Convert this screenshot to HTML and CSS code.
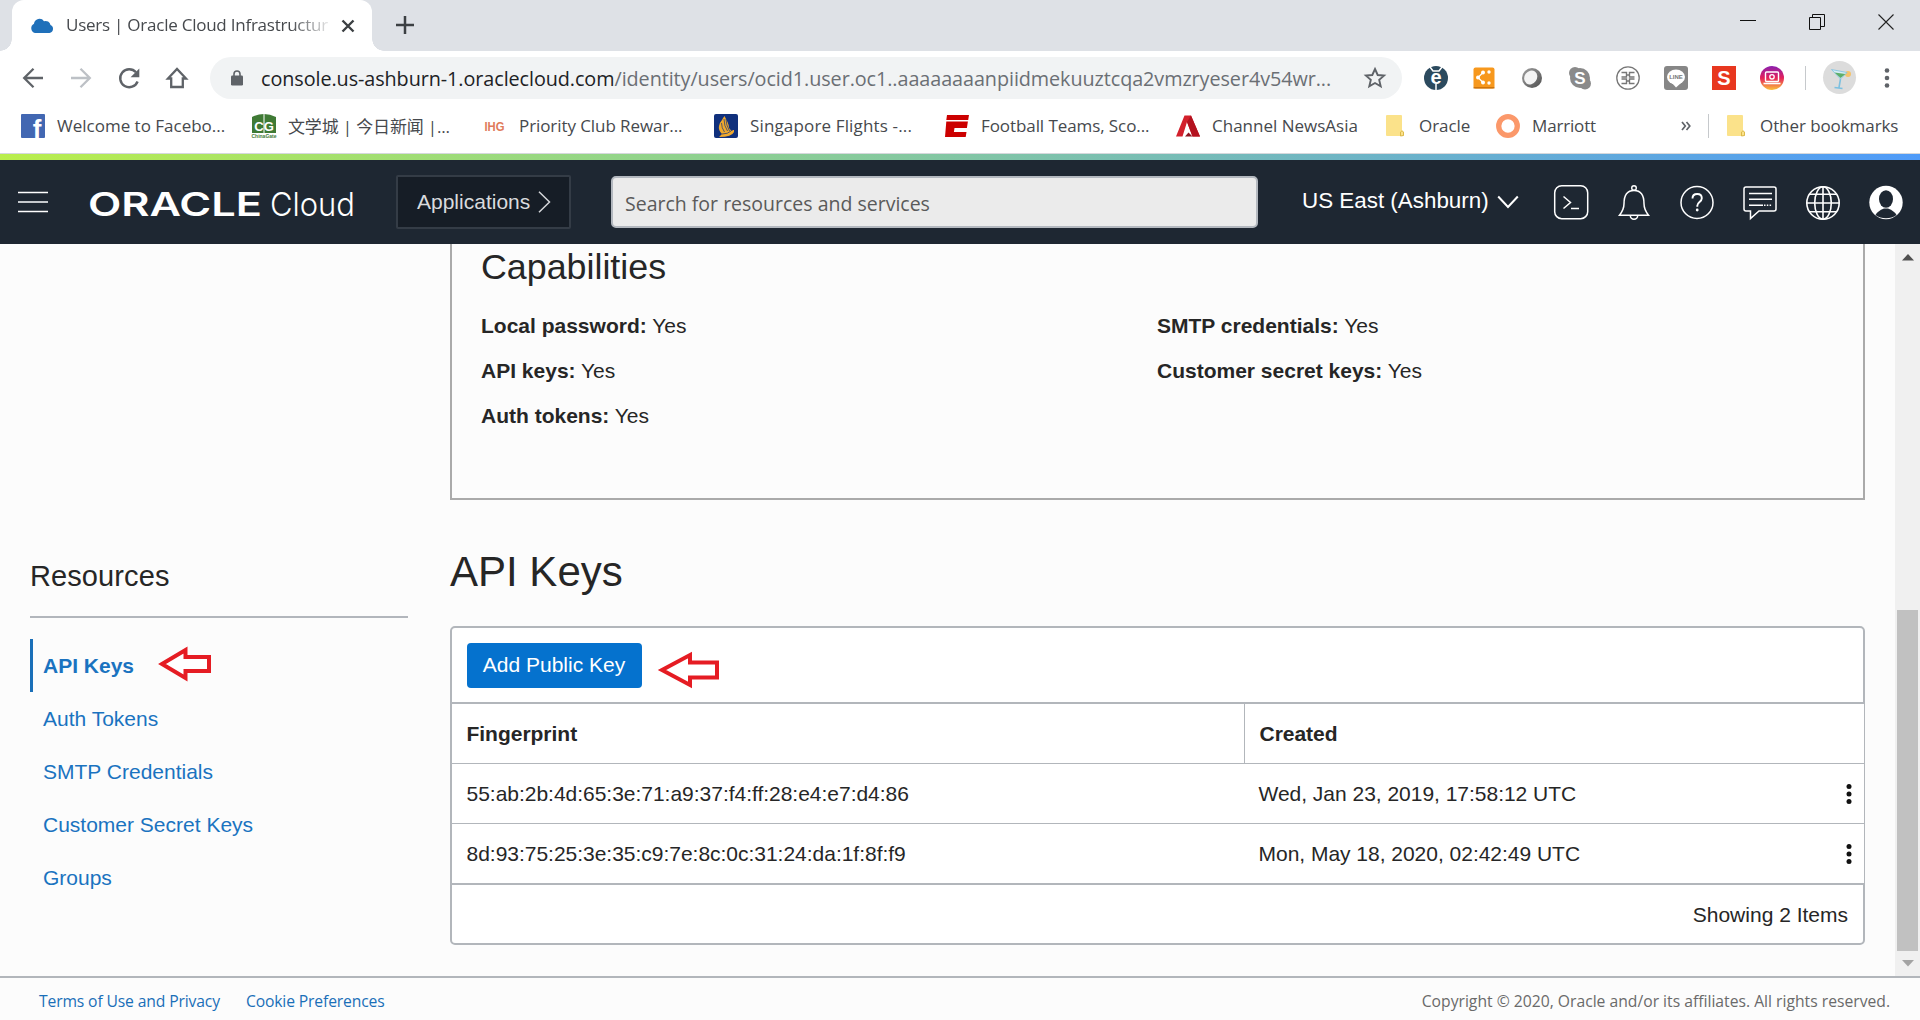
FILE: index.html
```html
<!DOCTYPE html>
<html lang="en">
<head>
<meta charset="utf-8">
<title>Users | Oracle Cloud Infrastructure</title>
<link rel="stylesheet" href="styles.css">
</head>
<body>
<header class="browser">
  <div class="tabstrip">
    <div class="tab">
      <svg class="tab-icon" width="24" height="16" viewBox="0 0 24 16"><path d="M5 15a5 5 0 0 1-1-9.3A5.500 5.500 0 0 1 14 3.200 5 5 0 0 1 20.500 7 4.200 4.200 0 0 1 19.500 15z" fill="#1f70ba"/></svg>
      <span class="tab-title">Users | Oracle Cloud Infrastructur</span>
      <svg class="tab-close" width="14" height="14" viewBox="0 0 14 14"><path d="M1.500 1.500l11 11M12.500 1.500l-11 11" stroke="#3c4043" stroke-width="2.400"/></svg>
    </div>
    <svg class="new-tab" width="18" height="18" viewBox="0 0 18 18"><path d="M9 0v18M0 9h18" stroke="#3c4043" stroke-width="2.500"/></svg>
    <div class="window-controls">
      <svg width="16" height="16" viewBox="0 0 16 16"><path d="M0 6.500h16" stroke="#111"/></svg>
      <svg width="16" height="16" viewBox="0 0 16 16"><path d="M.5 3.500h11v12h-11zM3.500 3.500v-3h12v12h-4" fill="none" stroke="#111"/></svg>
      <svg width="16" height="16" viewBox="0 0 16 16"><path d="M.5.5l15 15M15.500.5l-15 15" stroke="#222" stroke-width="1.100"/></svg>
    </div>
  </div>
  <div class="toolbar">
    <div class="nav-buttons">
      <svg width="24" height="24" viewBox="0 0 24 24"><path d="M22 12H4M12.500 2.700L3.200 12l9.300 9.300" fill="none" stroke="#5f6368" stroke-width="2.300"/></svg>
      <svg width="24" height="24" viewBox="0 0 24 24"><path d="M2 12h18M11.500 2.700l9.300 9.300-9.300 9.300" fill="none" stroke="#bdc1c6" stroke-width="2.300"/></svg>
      <svg width="24" height="24" viewBox="0 0 24 24"><path d="M20.600 15.500A9 9 0 1 1 19 6.300" fill="none" stroke="#5f6368" stroke-width="2.400"/><path d="M22.300 2.500v8.700h-8.700z" fill="#5f6368"/></svg>
      <svg width="24" height="24" viewBox="0 0 24 24"><path d="M3 12.500L12 3l9 9.500h-3.200V21H6.200v-8.500z" fill="none" stroke="#5f6368" stroke-width="2.300"/></svg>
    </div>
    <div class="omnibox">
      <svg width="12" height="16" viewBox="0 0 12 16"><rect y="5.500" width="12" height="10" rx="1.300" fill="#5f6368"/><path d="M3 6V4a3 3 0 0 1 6 0v2" fill="none" stroke="#5f6368" stroke-width="1.600"/></svg>
      <span class="url"><span class="url-host">console.us-ashburn-1.oraclecloud.com</span>/identity/users/ocid1.user.oc1..aaaaaaaanpiidmekuuztcqa2vmzryeser4v54wr...</span>
      <svg width="22" height="22" viewBox="0 0 22 22"><path d="M11 2l2.700 6 6.400.6-4.900 4.300 1.500 6.400L11 16l-5.700 3.300 1.500-6.400L1.900 8.600 8.300 8z" fill="none" stroke="#5f6368" stroke-width="1.900"/></svg>
    </div>
    <div class="extensions">
      <svg width="24" height="24" viewBox="0 0 24 24"><circle cx="12" cy="12" r="12" fill="#2c4a5e"/><path d="M6 1l3 4h6l3-4" fill="none" stroke="#fff" stroke-width="1.500"/><text x="12" y="18" class="g-e">e</text><path d="M12 18v6" stroke="#fff" stroke-width="1.500"/></svg>
      <svg width="24" height="24" viewBox="0 0 24 24"><rect x="1.500" y="1.500" width="21" height="21" rx="2" fill="#f7981d"/><path d="M1.500 21.800h21" stroke="#c8700c" stroke-width="1.400"/><g fill="#fff"><circle cx="6" cy="11.500" r="2"/><circle cx="11" cy="6.500" r="2"/><circle cx="11" cy="16.500" r="2"/><circle cx="17" cy="6" r="1.700"/><circle cx="17" cy="17" r="1.700"/></g><path d="M11 6.500l-5 5 5 5" fill="none" stroke="#fff" stroke-width="1.200"/></svg>
      <svg width="24" height="24" viewBox="0 0 24 24"><defs><linearGradient id="orb" x1="0" y1="0" x2="1" y2="1"><stop offset="0" stop-color="#a0a0a0"/><stop offset="1" stop-color="#505050"/></linearGradient></defs><circle cx="12" cy="12" r="10" fill="url(#orb)"/><ellipse cx="11" cy="11.500" rx="6.200" ry="7.300" transform="rotate(35 11 11)" fill="#f4f4f4"/></svg>
      <svg width="24" height="24" viewBox="0 0 24 24"><circle cx="12" cy="12" r="10" fill="#8a8a8a"/><circle cx="7" cy="7" r="6" fill="#8a8a8a"/><circle cx="17" cy="17.500" r="6" fill="#8a8a8a"/><text x="12" y="18" class="g-skype">S</text></svg>
      <svg width="24" height="24" viewBox="0 0 24 24"><circle cx="12" cy="12" r="11.200" fill="none" stroke="#777" stroke-width="1.300"/><path d="M5.500 6.500h5V11h-5M18.500 6.500h-5V11h5M5.500 17.500h5V13h-5M18.500 17.500h-5V13h5M10.500 9h3M10.500 15h3" fill="none" stroke="#777" stroke-width="1.400"/></svg>
      <svg width="24" height="24" viewBox="0 0 24 24"><rect width="24" height="24" rx="3" fill="#868686"/><ellipse cx="12" cy="11" rx="9" ry="7.500" fill="#fff"/><path d="M8 17h9l-5 4.500z" fill="#fff"/><text x="12" y="13.300" class="g-line">LINE</text></svg>
      <svg width="24" height="24" viewBox="0 0 24 24"><rect width="24" height="24" fill="#e8371f"/><text x="12" y="19" class="g-s">S</text></svg>
      <svg width="24" height="24" viewBox="0 0 24 24"><defs><linearGradient id="ig" x1="0" y1="0" x2="0" y2="1"><stop offset="0" stop-color="#8a1fb0"/><stop offset=".5" stop-color="#e4215a"/><stop offset="1" stop-color="#fcc13a"/></linearGradient></defs><circle cx="12" cy="12" r="12" fill="url(#ig)"/><rect x="5.500" y="6" width="13" height="9.500" rx="1" fill="none" stroke="#fff" stroke-width="1.400"/><circle cx="12" cy="10.800" r="2.200" fill="none" stroke="#fff" stroke-width="1.300"/><path d="M3.500 17.500h17" stroke="#fff" stroke-width="1.600"/></svg>
    </div>
    <span class="divider"></span>
    <svg class="profile" width="33" height="33" viewBox="0 0 33 33"><circle cx="16.500" cy="16.500" r="16.500" fill="#dcdcdc"/><circle cx="25" cy="13" r="3" fill="#f5c36b"/><path d="M8.500 8.500L24 11.500l-6.500 6.500z" fill="#d5eef5" stroke="#7cc0e0" stroke-width=".8"/><path d="M11.500 11.500l11 1.500-5 4z" fill="#5fae6a"/><path d="M17.500 18l-1.500 8.500M11.500 26.500l8 1" stroke="#7cc0e0" stroke-width="1.600"/></svg>
    <svg class="menu-dots" width="6" height="20" viewBox="0 0 6 20"><g fill="#5f6368"><circle cx="3" cy="2.500" r="2.300"/><circle cx="3" cy="10" r="2.300"/><circle cx="3" cy="17.500" r="2.300"/></g></svg>
  </div>
  <div class="bookmarks">
    <div class="bookmark"><svg width="24" height="24" viewBox="0 0 24 24"><rect width="24" height="24" rx="1" fill="#4267b2"/><text x="16" y="24" class="g-fb">f</text></svg><span>Welcome to Facebo...</span></div>
    <div class="bookmark"><svg width="24" height="24" viewBox="0 0 24 24"><path d="M0 3q12-6 24 0v16H0z" fill="#3f7a35"/><path d="M12 0v19" stroke="#fff"/><text x="12" y="17" class="g-cg">CG</text><text x="12" y="23.500" class="g-gate">ChinaGate</text></svg><span class="tight">文学城 | 今日新闻 |...</span></div>
    <div class="bookmark"><svg width="24" height="24" viewBox="0 0 24 24"><text x="11.500" y="16.500" class="g-ihg" textLength="20" lengthAdjust="spacingAndGlyphs">IHG</text></svg><span class="snug">Priority Club Rewar...</span></div>
    <div class="bookmark"><svg width="24" height="24" viewBox="0 0 24 24"><rect width="24" height="24" rx="2" fill="#10307c"/><path d="M10.500 2q1.500 3 3 6t1.500 6l3 3.500q-1 2.500-4 2.500l5-4h1v2q-2 5-15 5l3-3q-4-4-3-8 1-4 3-6 1-2 2.500-4z" fill="#f0a92c"/><path d="M10 5q0 7 3.500 12M7.500 9q0 5 3 9M12 5q0 6 3.500 12M8 20q6 0 9-3" fill="none" stroke="#10307c" stroke-width=".7"/></svg><span class="loose">Singapore Flights -...</span></div>
    <div class="bookmark"><svg width="24" height="24" viewBox="0 0 24 24"><path d="M2 1h22l-.8 5H1.300zM1.300 7.500h21.600l-1 6.500H9.500l-.6 4h12.600l-.8 5H0z" fill="#cc0000"/></svg><span class="snug">Football Teams, Sco...</span></div>
    <div class="bookmark cna"><svg width="24" height="24" viewBox="0 0 24 24"><path d="M8.500 1.500h6.500L24 22.500h-7.500L11 8 6.500 22.500H0z" fill="#d3202c"/><path d="M15 1.500l9 21h-7.500L11 8z" fill="#b3121f"/><path d="M9 22.500l7.500 0-4-4z" fill="#8e1520"/></svg><span>Channel NewsAsia</span></div>
    <div class="bookmark folder"><svg width="24" height="24" viewBox="0 0 24 24"><path d="M3 2q0-1 1-1h14q1 0 1 1v15l2 1v3q0 1-1 1H4q-1 0-1-1z" fill="#fbe28a"/><path d="M17.500 22v-4q1.500-2.500 3 0v3.500z" fill="#fbe28a" stroke="#dcb94a"/></svg><span class="snug">Oracle</span></div>
    <div class="bookmark"><svg width="24" height="24" viewBox="0 0 24 24"><circle cx="12" cy="12" r="9.300" fill="none" stroke="#fb986a" stroke-width="5.300"/></svg><span class="tight">Marriott</span></div>
    <svg class="more" width="10" height="10" viewBox="0 0 10 10"><path d="M1 1l3.300 4L1 9M5.500 1l3.300 4-3.300 4" fill="none" stroke="#5f6368" stroke-width="1.700"/></svg>
    <span class="divider"></span>
    <div class="bookmark other"><svg width="24" height="24" viewBox="0 0 24 24"><path d="M3 2q0-1 1-1h14q1 0 1 1v15l2 1v3q0 1-1 1H4q-1 0-1-1z" fill="#fbe28a"/><path d="M17.500 22v-4q1.500-2.500 3 0v3.500z" fill="#fbe28a" stroke="#dcb94a"/></svg><span class="snug">Other bookmarks</span></div>
  </div>
</header>

<div class="accent"></div>
<header class="console-bar">
  <svg class="burger" width="30" height="22" viewBox="0 0 30 22"><path d="M0 1.500h30M0 20.500h30" stroke="#fff" stroke-width="1.400"/><path d="M0 11h30" stroke="#c4c8cc" stroke-width="2"/></svg>
  <svg class="brand" width="266" height="32" viewBox="0 0 266 32"><text x="-1" y="27.500" class="brand-oracle" textLength="174" lengthAdjust="spacingAndGlyphs">ORACLE</text><text x="181" y="27.500" class="brand-cloud" textLength="85" lengthAdjust="spacingAndGlyphs">Cloud</text></svg>
  <div class="apps"><span>Applications</span><svg width="13" height="22" viewBox="0 0 13 22"><path d="M1 .8L11.500 11 1 21.200" fill="none" stroke="#d5d7da" stroke-width="1.500"/></svg></div>
  <div class="search"><span>Search for resources and services</span></div>
  <div class="region"><span>US East (Ashburn)</span><svg width="22" height="14" viewBox="0 0 22 14"><path d="M1.200 1.500L11 12l9.800-10.500" fill="none" stroke="#fff" stroke-width="2"/></svg></div>
  <div class="actions">
    <svg width="36" height="36" viewBox="0 0 36 36"><rect x="1.700" y="1.700" width="33" height="33" rx="7" fill="none" stroke="#fff" stroke-width="1.500"/><path d="M10.500 12.500l7 6-7 6M18 24.500h8" fill="none" stroke="#fff" stroke-width="1.500"/></svg>
    <svg width="36" height="36" viewBox="0 0 36 36"><path d="M3.500 31.200c2.800-3.600 4.500-7 4.500-11.500 0-8 3-13.200 10-13.200s10 5.200 10 13.200c0 4.500 1.700 7.900 4.500 11.500z" fill="none" stroke="#fff" stroke-width="1.500"/><circle cx="18" cy="4" r="2.300" fill="none" stroke="#fff" stroke-width="1.400"/><path d="M14.300 31.500a3.700 3.700 0 0 0 7.400 0" fill="none" stroke="#fff" stroke-width="1.500"/></svg>
    <svg width="36" height="36" viewBox="0 0 36 36"><circle cx="18" cy="18.500" r="16" fill="none" stroke="#fff" stroke-width="1.500"/><path d="M13.500 14.500c0-3 2-4.500 4.700-4.500s4.600 1.500 4.600 4.200c0 3.600-4.500 4-4.500 7.500v1" fill="none" stroke="#fff" stroke-width="1.900"/><circle cx="18.200" cy="26" r="1.400" fill="#fff"/></svg>
    <svg width="36" height="36" viewBox="0 0 36 36"><path d="M4 3h28q2 0 2 2v20q0 2-2 2H17l-8.500 7.500V27H4q-2 0-2-2V5q0-2 2-2z" fill="none" stroke="#fff" stroke-width="1.500"/><path d="M7 9.500h23M7 15.300h23M7 21.300h14" stroke="#fff" stroke-width="1.500"/><path d="M22 21.300h8" stroke="#fff" stroke-width="1.500" stroke-dasharray="1.500 1.300"/></svg>
    <svg width="36" height="36" viewBox="0 0 36 36"><g fill="none" stroke="#fff" stroke-width="1.600"><circle cx="18" cy="19" r="16.200"/><ellipse cx="18" cy="19" rx="8.300" ry="16.200"/><path d="M18 2.800v32.400M1.800 19h32.400M4.500 10.300h27M4.500 27.700h27"/></g></svg>
    <svg width="36" height="36" viewBox="0 0 36 36"><circle cx="18" cy="18.500" r="16.700" fill="#fff"/><ellipse cx="18" cy="15" rx="7" ry="8.800" fill="#1e2732"/><path d="M7.500 31q2-4 8.500-6.500h4q6.500 2.500 8.500 6.500-4.500 3.300-10.500 3.300T7.500 31z" fill="#1e2732"/></svg>
  </div>
</header>

<div class="viewport">
  <aside class="sidebar">
    <h2>Resources</h2>
    <nav>
      <a class="active">API Keys<svg class="callout-side" width="53" height="34" viewBox="0 0 53 34"><path d="M3 17L26.500 3v7H50v14H26.500v7z" fill="#fff" stroke="#e51c23" stroke-width="4"/></svg></a>
      <a>Auth Tokens</a>
      <a>SMTP Credentials</a>
      <a>Customer Secret Keys</a>
      <a>Groups</a>
    </nav>
  </aside>
  <main>
    <section class="capabilities">
      <h3>Capabilities</h3>
      <div class="facts">
        <p><b>Local password:</b> Yes</p><p><b>SMTP credentials:</b> Yes</p>
        <p><b>API keys:</b> Yes</p><p><b>Customer secret keys:</b> Yes</p>
        <p><b>Auth tokens:</b> Yes</p>
      </div>
    </section>
    <h1>API Keys</h1>
    <section class="panel">
      <div class="panel-top">
        <button type="button">Add Public Key</button>
        <svg class="callout" width="61" height="36" viewBox="0 0 61 36"><path d="M3 18L31 3v7.500h27v15H31V33z" fill="#fff" stroke="#e51c23" stroke-width="4"/></svg>
      </div>
      <div class="table">
        <div class="row head"><span>Fingerprint</span><span>Created</span></div>
        <div class="row"><span>55:ab:2b:4d:65:3e:71:a9:37:f4:ff:28:e4:e7:d4:86</span><span>Wed, Jan 23, 2019, 17:58:12 UTC</span><svg width="6" height="20" viewBox="0 0 6 20"><g fill="#111"><circle cx="3" cy="2.500" r="2.500"/><circle cx="3" cy="10" r="2.500"/><circle cx="3" cy="17.500" r="2.500"/></g></svg></div>
        <div class="row"><span>8d:93:75:25:3e:35:c9:7e:8c:0c:31:24:da:1f:8f:f9</span><span>Mon, May 18, 2020, 02:42:49 UTC</span><svg width="6" height="20" viewBox="0 0 6 20"><g fill="#111"><circle cx="3" cy="2.500" r="2.500"/><circle cx="3" cy="10" r="2.500"/><circle cx="3" cy="17.500" r="2.500"/></g></svg></div>
      </div>
      <div class="panel-bottom">Showing 2 Items</div>
    </section>
  </main>
  <div class="scrollbar">
    <svg width="12" height="7" viewBox="0 0 12 7"><path d="M0 6.500L6 0l6 6.500z" fill="#505050"/></svg>
    <div class="thumb"></div>
    <svg width="12" height="7" viewBox="0 0 12 7"><path d="M0 0l6 6.500L12 0z" fill="#a3a3a3"/></svg>
  </div>
</div>

<footer>
  <a>Terms of Use and Privacy</a>
  <a>Cookie Preferences</a>
  <span>Copyright © 2020, Oracle and/or its affiliates. All rights reserved.</span>
</footer>
</body>
</html>
```
FILE: styles.css
```css
* { box-sizing: border-box; }
body {
  margin: 0;
  width: 1920px;
  height: 1020px;
  display: flex;
  flex-direction: column;
  overflow: hidden;
  background: #fcfcfc;
  color: #262626;
  font: 21px "Liberation Sans", sans-serif;
}
h1, h2, h3, p { margin: 0; font-weight: 400; }
svg { display: block; flex: none; overflow: visible; }
span, a { white-space: nowrap; }

/* Browser chrome */
.browser {
  font: 17px "Open Sans", "Noto Sans CJK SC", sans-serif;
  color: #46494d;
  background: #fff;
}
.tabstrip {
  height: 51px;
  display: flex;
  align-items: center;
  padding-left: 12px;
  background: radial-gradient(circle at 0 0, #dee1e6 11.500px, #fff 12px) 0 39px / 12px 12px no-repeat, #dee1e6;
}
.tab {
  position: relative;
  width: 360px;
  height: 51px;
  display: flex;
  align-items: center;
  padding-left: 18px;
  background: #fff;
  border-radius: 12px 12px 0 0;
}
.tab::after {
  content: "";
  position: absolute;
  left: 360px;
  bottom: 0;
  width: 12px;
  height: 12px;
  background: radial-gradient(circle at 12px 0, #dee1e6 11.500px, #fff 12px);
}
.tab-title {
  width: 263px;
  margin: -2px 0 0 12px;
  letter-spacing: -0.24px;
  -webkit-mask-image: linear-gradient(90deg, #000 225px, transparent 268px);
  mask-image: linear-gradient(90deg, #000 225px, transparent 268px);
}
.tab-close { margin-left: 12px; }
.new-tab { margin: -1px 0 0 24px; }
.window-controls {
  display: flex;
  gap: 53px;
  margin: -8px 26px 0 auto;
}
.toolbar {
  height: 54px;
  display: flex;
  align-items: center;
  padding-left: 21px;
}
.nav-buttons { display: flex; gap: 24px; margin-top: -1px; }
.omnibox {
  width: 1192px;
  height: 42px;
  display: flex;
  align-items: center;
  margin-left: 21px;
  padding: 0 16px 0 21px;
  border-radius: 21px;
  background: #f1f3f4;
}
.url { margin-left: 18px; font-size: 19.800px; letter-spacing: -0.07px; color: #6b6f74; }
.url-host { color: #202124; }
.omnibox svg:last-child { margin-left: auto; }
.extensions { display: flex; gap: 24px; margin-left: 22px; }
.divider { width: 1px; height: 24px; background: #c6c9cc; }
.toolbar .divider { margin-left: 21px; }
.profile { margin: -1px 0 0 17px; }
.menu-dots { margin-left: 28px; }
.bookmarks {
  height: 48px;
  display: flex;
  align-items: center;
  padding-left: 21px;
  padding-bottom: 6px;
}
.bookmark {
  width: 231px;
  display: flex;
  align-items: center;
  gap: 12px;
}
.bookmark span { margin-top: -2px; }
.bookmark .snug { letter-spacing: -0.08px; }
.bookmark .tight { letter-spacing: -0.16px; }
.bookmark .loose { letter-spacing: 0.15px; }
.bookmark.cna { width: 207px; }
.bookmark.folder { width: 113px; }
.bookmark.folder + .bookmark { width: 185px; }
.bookmark.other { width: auto; margin-left: 15px; }
.bookmarks .divider { margin-left: 17px; }

text { font-family: "Liberation Sans", sans-serif; font-weight: 700; fill: #fff; text-anchor: middle; }
.g-e { font-size: 20px; }
.g-skype { font-size: 17px; }
.g-line { font-size: 6px; fill: #777; }
.g-s { font-size: 20px; }
.g-fb { font-size: 26px; }
.g-cg { font-size: 13px; }
.g-gate { font-size: 5px; fill: #3f7a35; }
.g-ihg { font-size: 12px; fill: #e07a5a; }

/* Console header */
.accent {
  height: 7px;
  border-top: 1px solid #d5d8dc;
  background: linear-gradient(90deg, #b9ee4c, #92d48a 33%, #72b8bd 66%, #4f9bf9);
}
.console-bar {
  height: 84px;
  display: flex;
  align-items: center;
  padding-left: 18px;
  background: #1e2732;
  color: #fff;
}
.brand { margin-left: 41px; margin-top: 3px; }
.brand text { text-anchor: start; }
.brand-oracle { font: 600 32px Inter, sans-serif; }
.brand-cloud { font: 300 33px Inter, sans-serif; }
.apps {
  width: 175px;
  height: 54px;
  display: flex;
  align-items: center;
  gap: 8px;
  margin-left: 41px;
  padding-left: 19px;
  border: 2px solid #343c46;
  border-radius: 2px;
  background: #161d26;
  color: #d9dbde;
}
.search {
  width: 647px;
  height: 52px;
  display: flex;
  align-items: center;
  margin-left: 40px;
  padding: 2px 0 0 12px;
  border: 2px solid #b3b8bf;
  border-radius: 5px;
  background: #ebebeb;
  color: #5a5a5a;
  font: 19.500px "Open Sans", sans-serif;
}
.region { display: flex; align-items: center; gap: 7px; margin-left: 44px; font-size: 22.400px; }
.region span { width: 188px; margin-top: -2px; }
.actions { display: flex; gap: 27px; margin-left: auto; margin-right: 16px; }

/* Page content */
.viewport {
  height: 732px;
  display: flex;
  overflow: hidden;
}
.sidebar { width: 378px; margin-left: 30px; padding-top: 312px; }
.sidebar h2 {
  height: 62px;
  border-bottom: 2px solid #b2b6bc;
  font-size: 29px;
  letter-spacing: 0.1px;
  line-height: 40px;
}
nav { margin-top: 21px; }
nav a {
  height: 53px;
  display: flex;
  align-items: center;
  padding-left: 10px;
  border-left: 3px solid transparent;
  color: #1a73c0;
}
nav .active { border-color: #1a6fb8; font-weight: 700; }
.callout-side { margin-left: 25px; margin-top: -3px; }
main { width: 1415px; margin-left: 42px; }
.capabilities {
  height: 256px;
  padding: 3px 0 0 29px;
  border: solid #aaa;
  border-width: 0 2px 2px;
}
.capabilities h3 { font-size: 35.800px; line-height: 40px; margin-bottom: 16px; }
.facts { display: grid; grid-template-columns: 676px 1fr; line-height: 45px; }
h1 { margin: 47px 0 29px; font-size: 42px; line-height: 50px; }
.panel { background: #fff; border-radius: 5px; }
.panel-top {
  height: 78px;
  display: flex;
  align-items: flex-start;
  padding: 15px 0 0 15px;
  border: 2px solid #b2b6bb;
  border-radius: 5px 5px 0 0;
}
button {
  width: 175px;
  height: 45px;
  padding: 0 1px 2px 0;
  border: 0;
  border-radius: 4px;
  background: #0572ce;
  color: #fff;
  font: inherit;
}
.callout { margin: 9px 0 0 17px; }
.table { border: solid #b2b6bb; border-width: 0 1px 0 2px; }
.row {
  display: flex;
  align-items: center;
  height: 60px;
  padding: 0 12px 0 14.500px;
  border-bottom: 1px solid #b2b6bb;
  letter-spacing: -0.02px;
}
.row:last-child { height: 59px; border: 0; }
.row span:first-child { width: 777px; }
.row span:nth-child(2) { padding-left: 15px; }
.row svg { margin-left: auto; }
.head { font-weight: 700; align-items: stretch; line-height: 59px; }
.head span:nth-child(2) { border-left: 1px solid #b2b6bb; }
.panel-bottom {
  height: 62px;
  padding: 1px 15px 0 0;
  border: 2px solid #b2b6bb;
  border-radius: 0 0 5px 5px;
  line-height: 58px;
  text-align: right;
}
.scrollbar {
  width: 25px;
  display: flex;
  flex-direction: column;
  align-items: center;
  margin-left: auto;
  padding: 10px 0 9px;
  background: #f0f0f0;
}
.thumb { width: 21px; height: 341px; margin: auto 0 9px; background: #c1c1c1; }

footer {
  height: 44px;
  display: flex;
  align-items: center;
  gap: 26px;
  padding: 4px 30px 0 39px;
  border-top: 2px solid #b2b6bb;
  color: #6a6a6a;
  font: 15.700px "Open Sans", sans-serif;
}
footer a { color: #1a6fb8; letter-spacing: -0.14px; }
footer span { margin-left: auto; }
```
